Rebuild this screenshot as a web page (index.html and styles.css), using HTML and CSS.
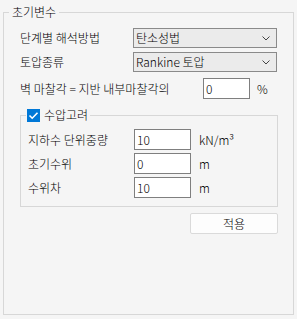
FILE: index.html
```html
<!DOCTYPE html>
<html>
<head>
<link rel="stylesheet" href="styles.css">
</head>
<body>

<div class="group">
  <span class="legend">초기변수</span>

  <div class="row">
    <span class="label">단계별 해석방법</span>
    <div class="select">
      <span>탄소성법</span>
      <svg class="chev" width="8" height="5" viewBox="0 0 8 5"><path d="M0.5 0.5 L4 4 L7.5 0.5" fill="none" stroke="#444" stroke-width="1"/></svg>
    </div>
  </div>

  <div class="row">
    <span class="label">토압종류</span>
    <div class="select">
      <span>Rankine 토압</span>
      <svg class="chev" width="8" height="5" viewBox="0 0 8 5"><path d="M0.5 0.5 L4 4 L7.5 0.5" fill="none" stroke="#444" stroke-width="1"/></svg>
    </div>
  </div>

  <div class="row friction">
    <span class="label wide">벽 마찰각 = 지반 내부마찰각의</span>
    <input class="field small" type="text" value="0">
    <span class="unit pct">%</span>
  </div>

  <div class="group inner">
    <label class="legend check-legend">
      <span class="checkbox">
        <svg width="13" height="13" viewBox="0 0 13 13"><rect width="13" height="13" fill="#0078d7"/><path d="M2.5 6.5 L5.2 9.2 L10.5 3.8" fill="none" stroke="#fff" stroke-width="1.6"/></svg>
      </span>
      수압고려
    </label>

    <div class="row">
      <span class="label sub">지하수 단위중량</span>
      <input class="field" type="text" value="10">
      <span class="unit">kN/m³</span>
    </div>
    <div class="row">
      <span class="label sub">초기수위</span>
      <input class="field" type="text" value="0">
      <span class="unit">m</span>
    </div>
    <div class="row">
      <span class="label sub">수위차</span>
      <input class="field" type="text" value="10">
      <span class="unit">m</span>
    </div>
  </div>

  <div class="actions">
    <button class="btn">적용</button>
  </div>
</div>

</body>
</html>
```

FILE: styles.css
```css
body {
  margin: 0;
  background-color: #f5f5f5;
  font-family: "Noto Sans CJK KR", "Noto Sans", sans-serif;
  font-size: 12px;
  font-weight: 300;
  color: #000;
}

.group {
  position: relative;
  margin: 12px 3px 4px 3px;
  height: 303px;
  box-sizing: border-box;
  border: 1px solid #d7d7d7;
  padding: 15px 15px 0 16px;
}

.legend {
  position: absolute;
  top: -9px;
  left: 5px;
  padding: 0 3px;
  line-height: 16px;
  background-color: #f5f5f5;
}

.row {
  display: flex;
  align-items: center;
  height: 20px;
  margin-bottom: 4px;
}

.label {
  width: 113px;
  flex: none;
  line-height: 16px;
}

.label.wide {
  width: auto;
  flex: 1;
}

.select {
  width: 144px;
  height: 20px;
  box-sizing: border-box;
  border: 1px solid #8a8a8a;
  background-color: #ebebeb;
  display: flex;
  align-items: center;
  justify-content: space-between;
  padding: 0 6px 0 2px;
  line-height: 16px;
}

.chev {
  display: block;
}

.friction {
  height: 21px;
  margin-top: 6px;
  margin-bottom: 0;
}

.field {
  width: 57px;
  height: 21px;
  box-sizing: border-box;
  border: 1px solid #7f7f7f;
  background-color: #fff;
  padding: 0 2px;
  margin: 0;
  font-family: inherit;
  font-size: 12px;
  font-weight: 300;
  outline: none;
}

.field.small {
  width: 47px;
}

.unit {
  margin-left: 8px;
  line-height: 16px;
}

.unit.pct {
  width: 21px;
  margin-left: 7px;
}

.inner {
  margin: 16px 0 0 0;
  width: 258px;
  height: 92px;
  padding: 13px 0 0 7px;
}

.inner .row {
  height: 21px;
  margin-bottom: 3px;
}

.check-legend {
  top: -9px;
  left: 5px;
  padding: 0 2px 0 1px;
  display: flex;
  align-items: center;
  gap: 4px;
}

.checkbox svg {
  display: block;
}

.label.sub {
  width: 106px;
}

.actions {
  display: flex;
  justify-content: flex-end;
  width: 258px;
  margin-top: 6px;
}

.btn {
  width: 88px;
  height: 21px;
  box-sizing: border-box;
  border: 1px solid #dadada;
  border-radius: 2px;
  background-color: #fdfdfd;
  font-family: inherit;
  font-size: 12px;
  font-weight: 300;
  color: #000;
  padding: 0;
  line-height: 16px;
}
```
